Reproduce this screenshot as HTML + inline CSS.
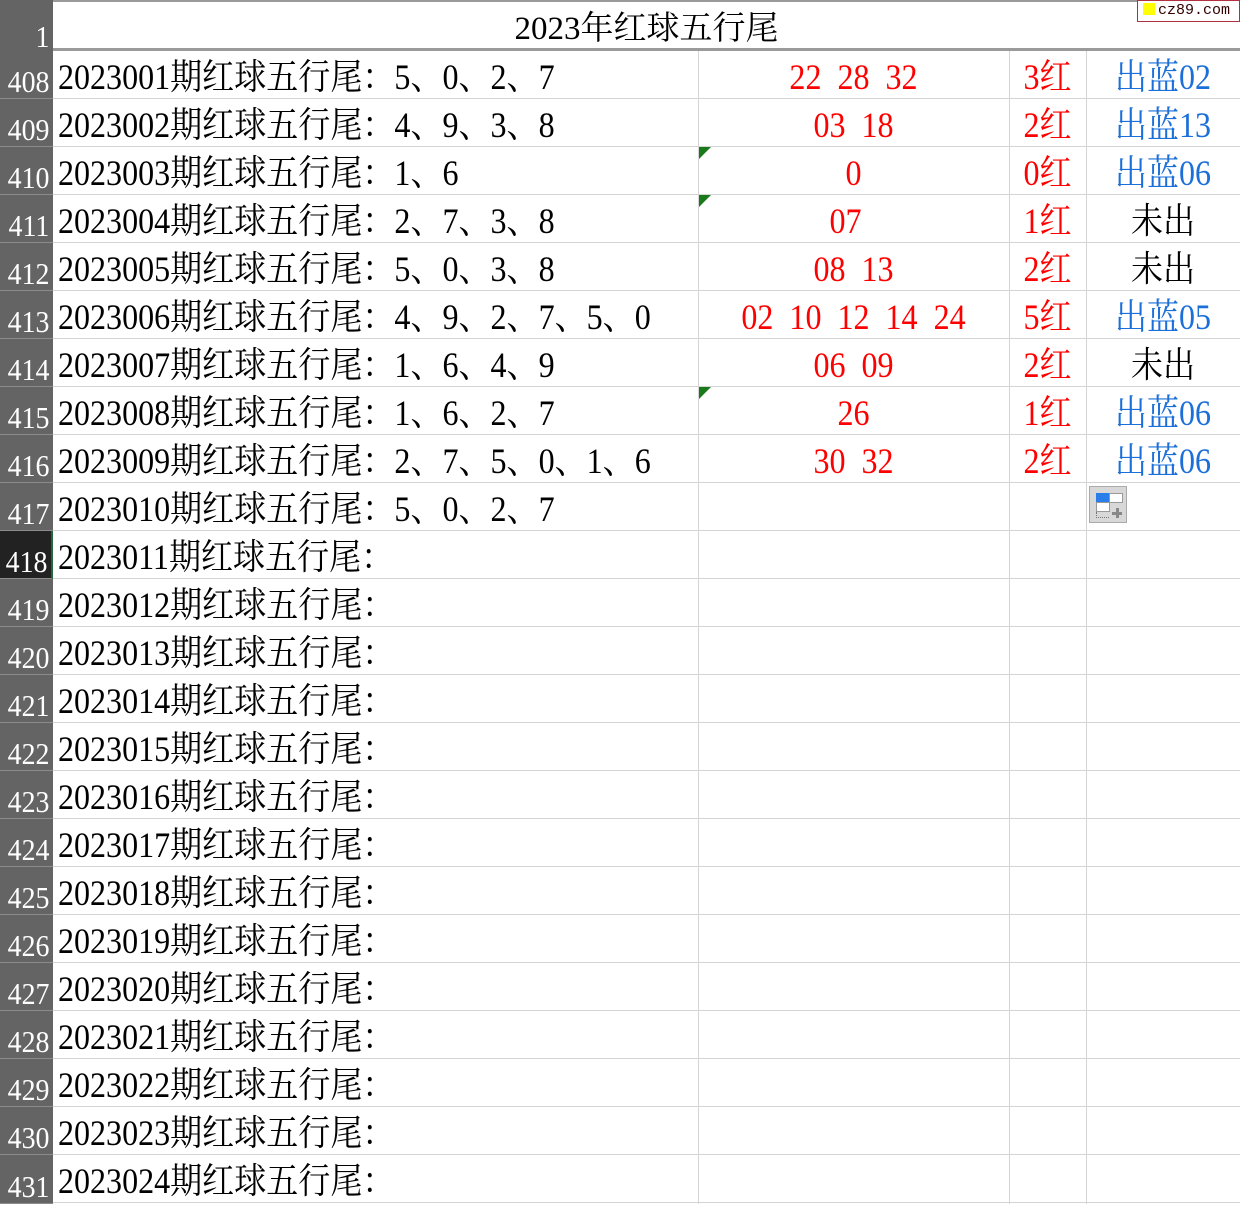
<!DOCTYPE html>
<html><head><meta charset="utf-8"><style>
body{margin:0;width:1240px;height:1204px;overflow:hidden;background:#fff;position:relative;font-family:"Liberation Serif","Noto Serif CJK SC",serif}
.rh{position:absolute;left:0;width:53px;background:#646464;color:#fff;border-bottom:1px solid #8c8c8c;box-sizing:border-box}
.rh span{position:absolute;right:4px;bottom:1px;font-size:31px;line-height:31px;transform:scaleX(.9);transform-origin:right}
.hl{position:absolute;left:53px;right:0;height:1px;background:#d4d4d4}
.vl{position:absolute;top:51px;bottom:0;width:1px;background:#d4d4d4}
.t{position:absolute;font-size:36px;line-height:48px;white-space:pre;transform:scaleX(.89)}
.a{left:58px;transform-origin:left;color:#000}
.b{left:698px;width:311px;text-align:center;color:#f00}
.c{left:1009px;width:77px;text-align:center;color:#f00}
.d{left:1086px;width:154px;text-align:center;color:#1a6fd8}
.k{color:#000}
.tri{position:absolute;left:699px;width:0;height:0;border-top:12px solid #1a7a1a;border-right:12px solid transparent}
</style></head><body>
<div style="position:absolute;left:0;top:0;width:1240px;height:2px;background:#9a9a9a"></div>
<div class="rh" style="top:0;height:51px;border:none"><span style="bottom:-1px">1</span></div>
<div style="position:absolute;left:53px;top:48px;width:1187px;height:3px;background:#9a9a9a"></div>
<div class="t" style="left:53px;width:1187px;text-align:center;top:5px;font-size:33px;transform:none">2023年红球五行尾</div>
<div style="position:absolute;left:1137px;top:0;width:101px;height:20px;border:1px solid #b03040;background:#fff;font-family:'Liberation Mono',monospace;font-size:15px;line-height:20px;color:#300;white-space:nowrap;overflow:hidden"><span style="display:inline-block;width:12px;height:12px;background:#ff0;margin:0 3px 0 5px;vertical-align:-1px"></span>cz89.com</div>
<div class="vl" style="left:698px"></div><div class="vl" style="left:1009px"></div><div class="vl" style="left:1086px"></div>

<div class="rh" style="top:51px;height:48px"><span>408</span></div><div class="hl" style="top:98px"></div>
<div class="rh" style="top:99px;height:48px"><span>409</span></div><div class="hl" style="top:146px"></div>
<div class="rh" style="top:147px;height:48px"><span>410</span></div><div class="hl" style="top:194px"></div>
<div class="rh" style="top:195px;height:48px"><span>411</span></div><div class="hl" style="top:242px"></div>
<div class="rh" style="top:243px;height:48px"><span>412</span></div><div class="hl" style="top:290px"></div>
<div class="rh" style="top:291px;height:48px"><span>413</span></div><div class="hl" style="top:338px"></div>
<div class="rh" style="top:339px;height:48px"><span>414</span></div><div class="hl" style="top:386px"></div>
<div class="rh" style="top:387px;height:48px"><span>415</span></div><div class="hl" style="top:434px"></div>
<div class="rh" style="top:435px;height:48px"><span>416</span></div><div class="hl" style="top:482px"></div>
<div class="rh" style="top:483px;height:48px"><span>417</span></div><div class="hl" style="top:530px"></div>
<div class="rh" style="top:531px;height:48px;background:#222;border-right:2px solid #1d6b3a"><span>418</span></div><div class="hl" style="top:578px"></div>
<div class="rh" style="top:579px;height:48px"><span>419</span></div><div class="hl" style="top:626px"></div>
<div class="rh" style="top:627px;height:48px"><span>420</span></div><div class="hl" style="top:674px"></div>
<div class="rh" style="top:675px;height:48px"><span>421</span></div><div class="hl" style="top:722px"></div>
<div class="rh" style="top:723px;height:48px"><span>422</span></div><div class="hl" style="top:770px"></div>
<div class="rh" style="top:771px;height:48px"><span>423</span></div><div class="hl" style="top:818px"></div>
<div class="rh" style="top:819px;height:48px"><span>424</span></div><div class="hl" style="top:866px"></div>
<div class="rh" style="top:867px;height:48px"><span>425</span></div><div class="hl" style="top:914px"></div>
<div class="rh" style="top:915px;height:48px"><span>426</span></div><div class="hl" style="top:962px"></div>
<div class="rh" style="top:963px;height:48px"><span>427</span></div><div class="hl" style="top:1010px"></div>
<div class="rh" style="top:1011px;height:48px"><span>428</span></div><div class="hl" style="top:1058px"></div>
<div class="rh" style="top:1059px;height:48px"><span>429</span></div><div class="hl" style="top:1106px"></div>
<div class="rh" style="top:1107px;height:48px"><span>430</span></div><div class="hl" style="top:1154px"></div>
<div class="rh" style="top:1155px;height:49px"><span>431</span></div><div class="hl" style="top:1202px"></div>

<div class="tri" style="top:147px"></div><div class="tri" style="top:195px"></div><div class="tri" style="top:387px"></div>

<div class="t a" style="top:53px">2023001期红球五行尾：5、0、2、7</div>
<div class="t a" style="top:101px">2023002期红球五行尾：4、9、3、8</div>
<div class="t a" style="top:149px">2023003期红球五行尾：1、6</div>
<div class="t a" style="top:197px">2023004期红球五行尾：2、7、3、8</div>
<div class="t a" style="top:245px">2023005期红球五行尾：5、0、3、8</div>
<div class="t a" style="top:293px">2023006期红球五行尾：4、9、2、7、5、0</div>
<div class="t a" style="top:341px">2023007期红球五行尾：1、6、4、9</div>
<div class="t a" style="top:389px">2023008期红球五行尾：1、6、2、7</div>
<div class="t a" style="top:437px">2023009期红球五行尾：2、7、5、0、1、6</div>
<div class="t a" style="top:485px">2023010期红球五行尾：5、0、2、7</div>
<div class="t a" style="top:533px">2023011期红球五行尾：</div>
<div class="t a" style="top:581px">2023012期红球五行尾：</div>
<div class="t a" style="top:629px">2023013期红球五行尾：</div>
<div class="t a" style="top:677px">2023014期红球五行尾：</div>
<div class="t a" style="top:725px">2023015期红球五行尾：</div>
<div class="t a" style="top:773px">2023016期红球五行尾：</div>
<div class="t a" style="top:821px">2023017期红球五行尾：</div>
<div class="t a" style="top:869px">2023018期红球五行尾：</div>
<div class="t a" style="top:917px">2023019期红球五行尾：</div>
<div class="t a" style="top:965px">2023020期红球五行尾：</div>
<div class="t a" style="top:1013px">2023021期红球五行尾：</div>
<div class="t a" style="top:1061px">2023022期红球五行尾：</div>
<div class="t a" style="top:1109px">2023023期红球五行尾：</div>
<div class="t a" style="top:1157px">2023024期红球五行尾：</div>

<div class="t b" style="top:53px">22  28  32</div>
<div class="t b" style="top:101px">03  18</div>
<div class="t b" style="top:149px">0</div>
<div class="t b" style="top:197px">07  </div>
<div class="t b" style="top:245px">08  13</div>
<div class="t b" style="top:293px">02  10  12  14  24</div>
<div class="t b" style="top:341px">06  09</div>
<div class="t b" style="top:389px">26</div>
<div class="t b" style="top:437px">30  32</div>

<div class="t c" style="top:53px">3红</div>
<div class="t c" style="top:101px">2红</div>
<div class="t c" style="top:149px">0红</div>
<div class="t c" style="top:197px">1红</div>
<div class="t c" style="top:245px">2红</div>
<div class="t c" style="top:293px">5红</div>
<div class="t c" style="top:341px">2红</div>
<div class="t c" style="top:389px">1红</div>
<div class="t c" style="top:437px">2红</div>

<div class="t d" style="top:53px">出蓝02</div>
<div class="t d" style="top:101px">出蓝13</div>
<div class="t d" style="top:149px">出蓝06</div>
<div class="t d k" style="top:197px">未出</div>
<div class="t d k" style="top:245px">未出</div>
<div class="t d" style="top:293px">出蓝05</div>
<div class="t d k" style="top:341px">未出</div>
<div class="t d" style="top:389px">出蓝06</div>
<div class="t d" style="top:437px">出蓝06</div>

<div style="position:absolute;left:1089px;top:486px;width:38px;height:37px;background:#d8d8d8;border:1px solid #aaa;box-sizing:border-box">
<div style="position:absolute;left:6px;top:6px;width:13px;height:9px;background:#2b7de9"></div>
<div style="position:absolute;left:19px;top:6px;width:12px;height:8px;background:#fff;border:1px solid #999"></div>
<div style="position:absolute;left:6px;top:15px;width:12px;height:8px;background:#fff;border:1px solid #999"></div>
<div style="position:absolute;left:6px;top:25px;width:12px;height:5px;border-bottom:1px dotted #777;border-left:1px dotted #777"></div>
<div style="position:absolute;left:22px;top:25px;width:10px;height:3px;background:#888"></div>
<div style="position:absolute;left:25.5px;top:21px;width:3px;height:10px;background:#888"></div>
</div>
</body></html>
